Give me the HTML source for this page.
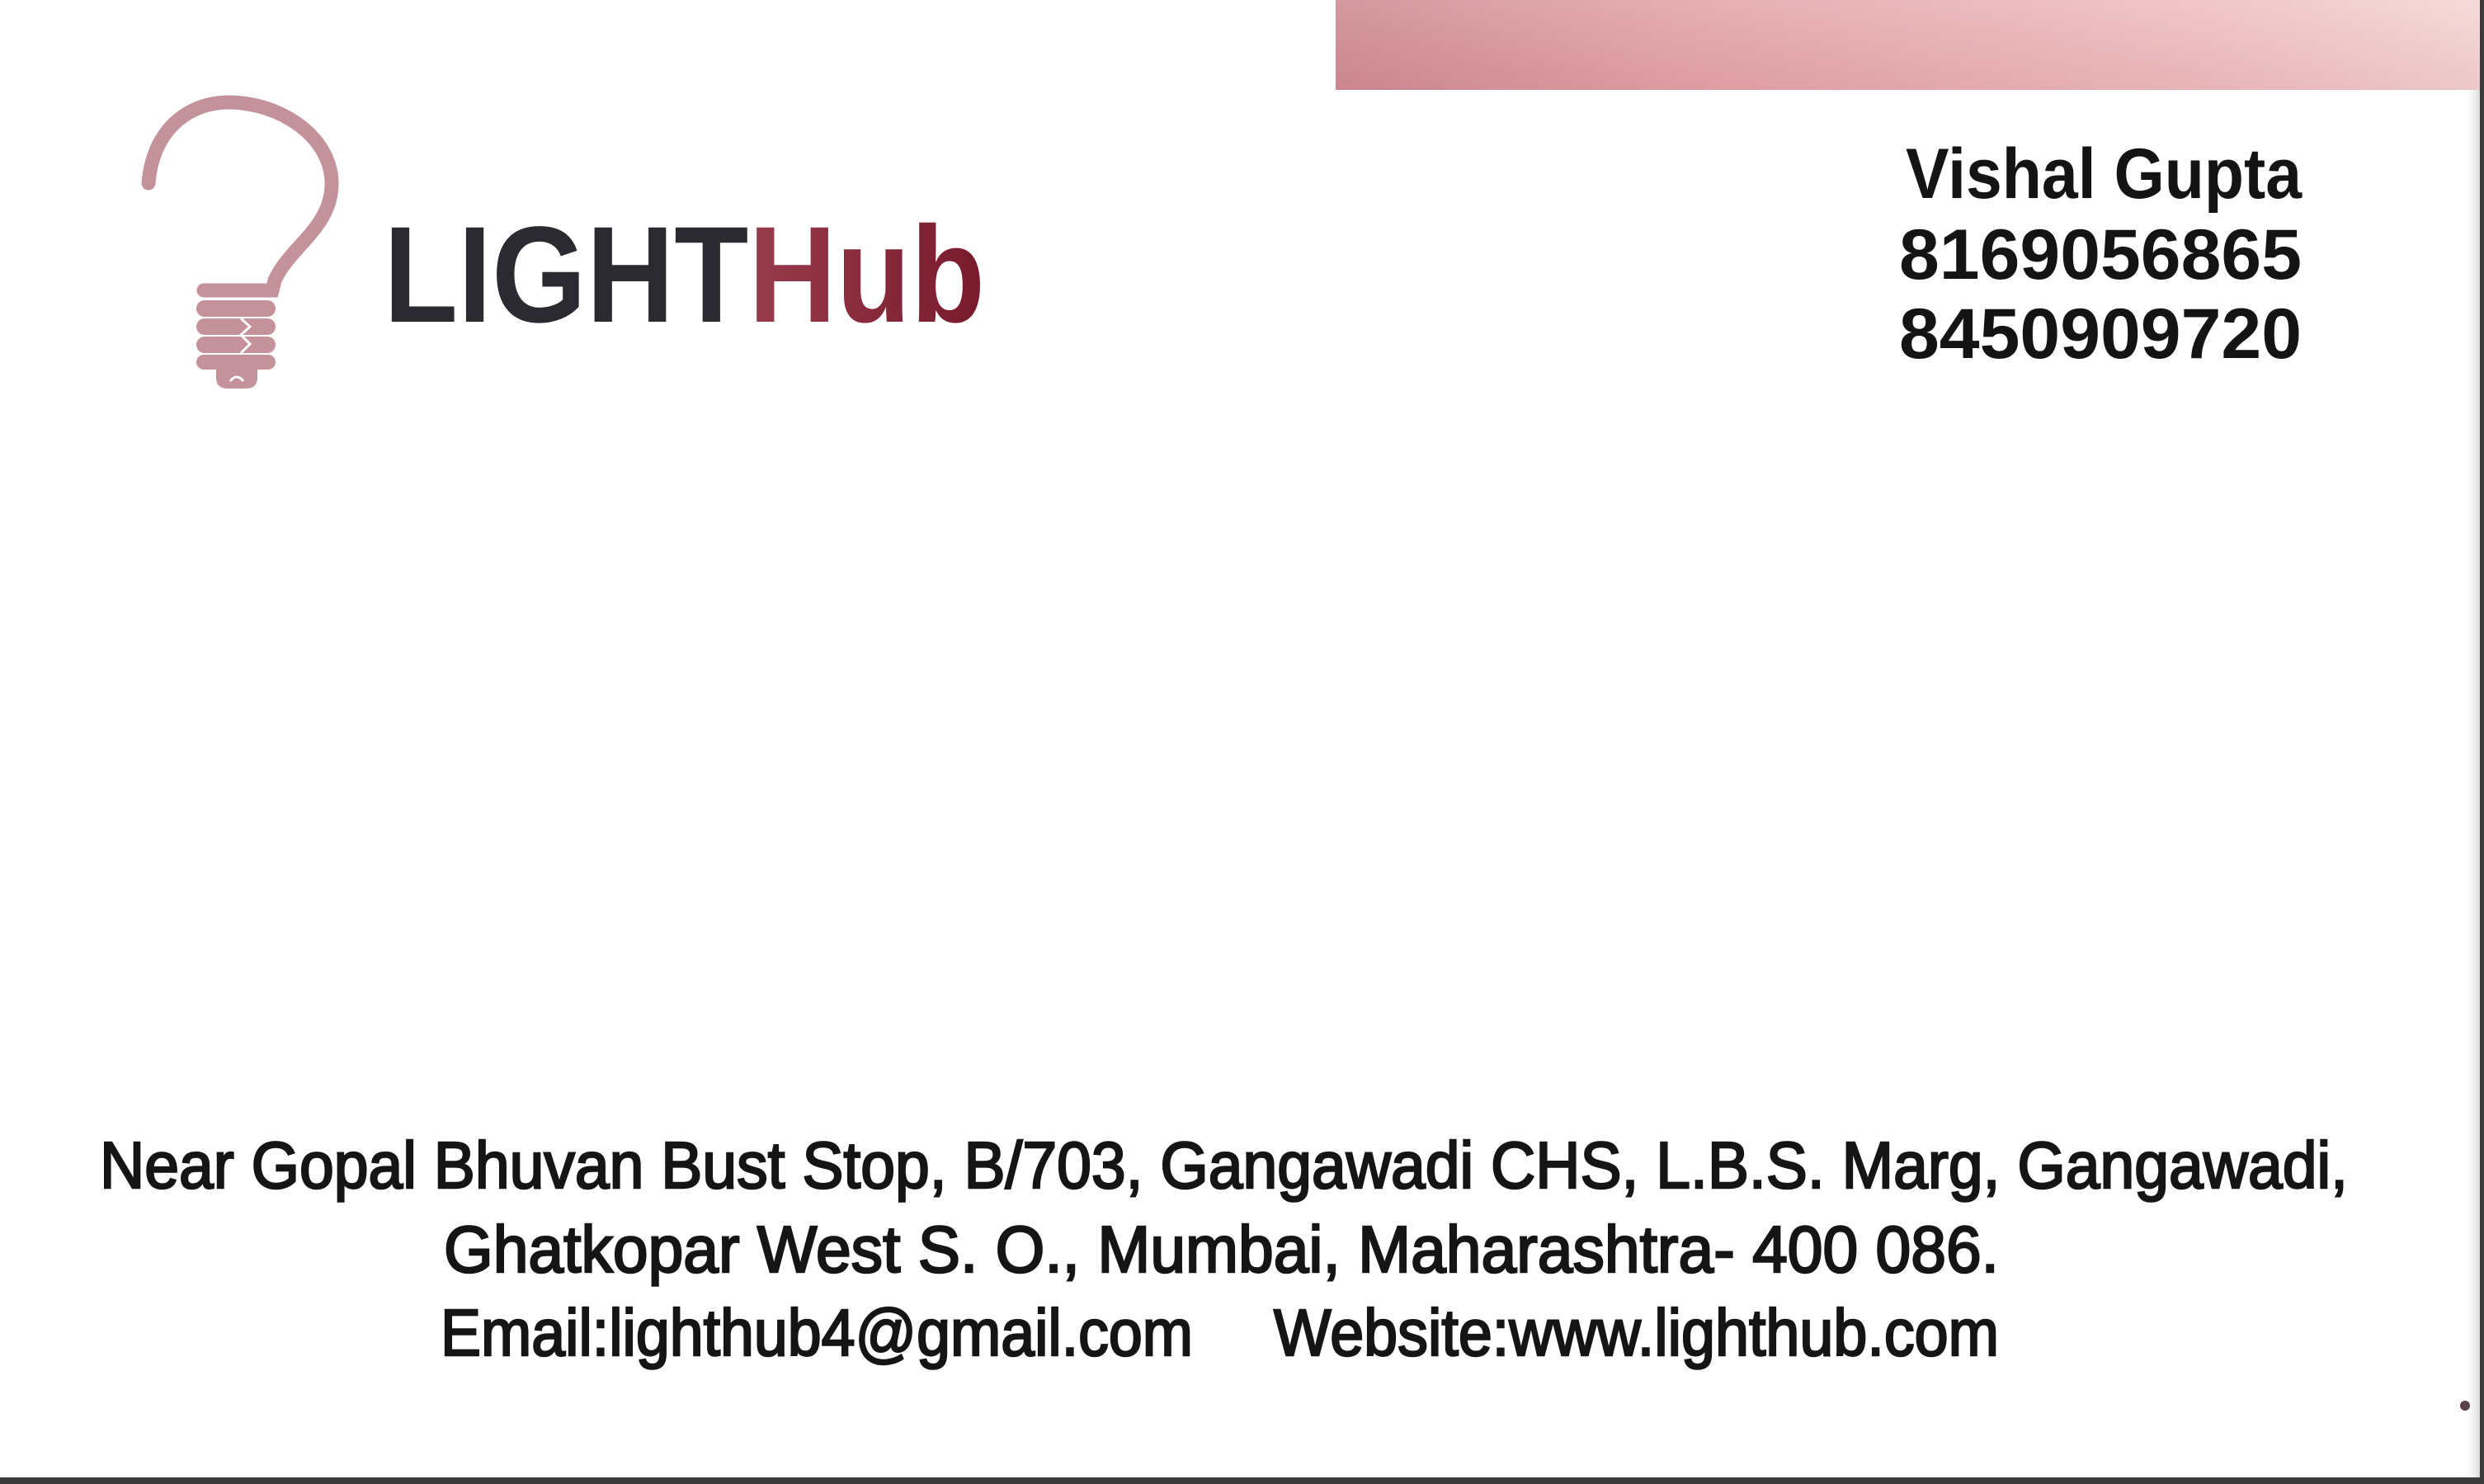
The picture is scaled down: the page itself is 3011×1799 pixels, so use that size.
<!DOCTYPE html>
<html><head><meta charset="utf-8"><style>
html,body{margin:0;padding:0;background:#fff;}
svg{display:block;}
</style></head><body>
<svg width="3011" height="1799" viewBox="0 0 3011 1799" xmlns="http://www.w3.org/2000/svg">
<defs>
<linearGradient id="band" x1="0" y1="0" x2="1" y2="0">
<stop offset="0" stop-color="#cf8d94"/>
<stop offset="0.3" stop-color="#e3a5aa"/>
<stop offset="0.75" stop-color="#efc0c2"/>
<stop offset="1" stop-color="#f5d6d6"/>
</linearGradient>
<linearGradient id="bandv" x1="0" y1="0" x2="0" y2="1">
<stop offset="0" stop-color="#fff" stop-opacity="0.1"/>
<stop offset="1" stop-color="#a04050" stop-opacity="0.1"/>
</linearGradient>
<linearGradient id="hub" x1="0" y1="0" x2="1" y2="0">
<stop offset="0" stop-color="#c07480"/>
<stop offset="0.5" stop-color="#a04556"/>
<stop offset="1" stop-color="#781a2c"/>
</linearGradient>
<linearGradient id="edge" x1="0" y1="0" x2="1" y2="0">
<stop offset="0" stop-color="#fff" stop-opacity="0"/>
<stop offset="1" stop-color="#bdbdbd"/>
</linearGradient>
</defs>
<rect width="3011" height="1799" fill="#fff"/>
<rect x="1619" y="0" width="1392" height="109" fill="url(#band)"/>
<rect x="1619" y="0" width="1392" height="109" fill="url(#bandv)"/>
<rect x="2985" y="109" width="22" height="1684" fill="url(#edge)" opacity="0.6"/>
<rect x="3006" y="0" width="5" height="1799" fill="#3a3a3a"/>
<rect x="0" y="1791" width="3011" height="8" fill="#3b3b3b"/>

<!-- bulb -->
<g fill="none" stroke="#c3929a" stroke-linecap="round">
<path d="M180 222 C185 160 225 125 276 124 C340 124 400 165 402 220 C404 275 350 300 333 340 L330 352 L247 352" stroke-width="17"/>
</g>
<g fill="#c3929a">
<rect x="238" y="364" width="96" height="20" rx="10"/>
<rect x="238" y="386" width="96" height="20" rx="10"/>
<rect x="238" y="408" width="96" height="20" rx="10"/>
<rect x="238" y="430" width="96" height="18" rx="9"/>
<path d="M262 446 H312 V458 Q312 471 298 471 H276 Q262 471 262 458 Z"/>
</g>
<g stroke="#fff" stroke-width="3" fill="none">
<path d="M292 386 L303 396 L292 406 L303 417 L292 428"/>
<path d="M279 462 Q287 452 295 462"/>
</g>

<text x="465" y="390" font-family="Liberation Sans, sans-serif" font-weight="bold" font-size="166" textLength="729" lengthAdjust="spacingAndGlyphs"><tspan fill="#2b2a31">LIGHT</tspan><tspan fill="url(#hub)">Hub</tspan></text>

<g font-family="Liberation Sans, sans-serif" font-weight="bold" fill="#141414">
<text x="2310" y="240" font-size="86" textLength="480" lengthAdjust="spacingAndGlyphs">Vishal Gupta</text>
<text x="2302" y="338" font-size="86" textLength="488" lengthAdjust="spacingAndGlyphs">8169056865</text>
<text x="2302" y="434" font-size="86" textLength="488" lengthAdjust="spacingAndGlyphs">8450909720</text>
</g>

<g font-family="Liberation Sans, sans-serif" fill="#151515" stroke="#151515" stroke-width="2.5" font-size="80">
<text x="121" y="1440" textLength="2725" lengthAdjust="spacingAndGlyphs">Near Gopal Bhuvan Bust Stop, B/703, Gangawadi CHS, L.B.S. Marg, Gangawadi,</text>
<text x="538" y="1542" textLength="1885" lengthAdjust="spacingAndGlyphs">Ghatkopar West S. O., Mumbai, Maharashtra- 400 086.</text>
<text x="534" y="1643" textLength="912" lengthAdjust="spacingAndGlyphs">Email:lighthub4@gmail.com</text>
<text x="1544" y="1643" textLength="879" lengthAdjust="spacingAndGlyphs">Website:www.lighthub.com</text>
</g>
<circle cx="2988" cy="1704" r="6" fill="#5a4048"/>
</svg>
</body></html>
